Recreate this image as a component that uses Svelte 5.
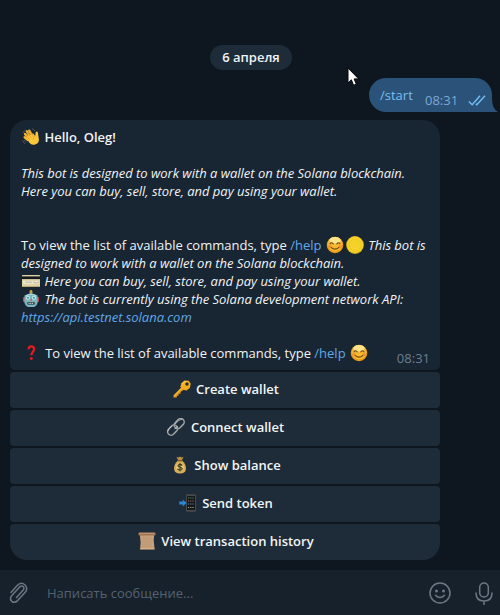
<script>
  const actions = [
    { icon: 'key', label: 'Create wallet' },
    { icon: 'link', label: 'Connect wallet' },
    { icon: 'bag', label: 'Show balance' },
    { icon: 'phone', label: 'Send token' },
    { icon: 'scroll', label: 'View transaction history' }
  ];
</script>

{#snippet emoji(name)}
  <svg class={['emoji', name]} viewBox="0 0 18 18" aria-hidden="true">
    {#if name === 'wave'}
      <g stroke="#48545c" stroke-width="1" fill="none"><path d="M.8 5.2Q1.500 3 3.400 2.200M9.800 .8q2.200.2 3.300 2.400M.7 12.300q.4 2.200 2.200 3.700M2.500 12q.5 1.600 1.800 2.600"/></g>
      <g stroke="#f5b731" stroke-width="2.300" stroke-linecap="round"><path d="M7.500 8 4.800 3.200M9.800 7 7.300 2.600M5.800 9.500 3 6M6 12 2.600 9.300"/></g>
      <path d="M4.500 9.500 11 5.300l2.200 2.600.4-3.500q.9-1.500 2.200-.2l1.100 7.200q.2 3.400-3.200 4.900-4 1.500-6.400-1.500z" fill="#fbc63c"/>
      <path d="M5.500 4.500 9.300 9.700M8.300 3.500l3.200 5.200M4 7.700l3.500 3.800" stroke="#d98a22" stroke-width=".6" fill="none"/>
      <path d="M13.200 7.900q-2.300 1.200-2 3.500" stroke="#e39a27" stroke-width=".7" fill="none"/>
    {:else if name === 'smile'}
      <circle cx="9" cy="9" r="8.300" fill="#ea9a17"/>
      <circle cx="9" cy="8.200" r="7.300" fill="#f5b932"/>
      <ellipse cx="9" cy="4.300" rx="5.600" ry="3.300" fill="#fde48b"/>
      <path d="M4 7.800q1.500-2 3.200 0M10.800 7.800q1.600-2 3.200 0M5 11.300q4 3.800 8 0" fill="none" stroke="#754715" stroke-width="1.100" stroke-linecap="round"/>
      <ellipse cx="3.800" cy="10.500" rx="1.700" ry="1.200" fill="#f17a28" opacity=".65"/><ellipse cx="14.200" cy="10.500" rx="1.700" ry="1.200" fill="#f17a28" opacity=".65"/>
    {:else if name === 'coin'}
      <circle cx="9" cy="9" r="8.900" fill="#d6ad18"/><circle cx="9" cy="8.700" r="8.200" fill="#f5d229"/>
      <circle cx="9" cy="9" r="6" fill="none" stroke="#e3b91f" stroke-width=".8" stroke-dasharray="1 1"/>
    {:else if name === 'card'}
      <rect y="3" width="18" height="12" rx=".7" fill="#ddd3a5"/><path d="M0 4.400h18v2.700H0z" fill="#16191b"/>
      <path d="M1.200 8.800h15v3h-15z" fill="#f0ead0"/><path d="M3 10.200h7" stroke="#b3b3b2"/><path d="M11 10.500q1-1.500 2 0t3-.3" stroke="#818ba8" stroke-width=".6" fill="none"/><path d="M0 14.500h18" stroke="#b6a974"/>
    {:else if name === 'robot'}
      <path d="M7.500 2h3v3h-3z" fill="#7d9ba1"/><circle cx="9" cy="1.500" r="1.400" fill="#d69a32"/>
      <rect x="1" y="7" width="2.300" height="5" rx="1" fill="#c84c50"/><rect x="14.700" y="7" width="2.300" height="5" rx="1" fill="#c84c50"/>
      <path d="M2.500 5.500Q9 1.500 15.500 5.500l.2 6.500q-.7 4-3.700 5H6q-3-1-3.700-5z" fill="#79b7bd"/>
      <path d="M4 5.700q5-3 10 0" fill="none" stroke="#aed9d6"/>
      <circle cx="6" cy="7.800" r="2" fill="#c4f0ed"/><circle cx="12" cy="7.800" r="2" fill="#c4f0ed"/><circle cx="6" cy="7.800" r="1" fill="#2d8da0"/><circle cx="12" cy="7.800" r="1" fill="#2d8da0"/>
      <path d="m9 8.500-1 2h2z" fill="#d83c42"/><rect x="5" y="12" width="8" height="2.800" rx="1.200" fill="#3a5660"/><path d="M6.500 13.400h5" stroke="#e2e5dc" stroke-dasharray="1 .7"/>
    {:else if name === 'question'}
      <path d="M6.700 5.300Q6.500 2.400 9.300 2.400T12 5.200c0 2.200-2.400 2.900-2.600 6" fill="none" stroke="#e01c20" stroke-width="2.300"/><circle cx="9.300" cy="14.600" r="1.500" fill="#e01c20"/>
    {:else if name === 'key'}
      <path d="M8.400 7.200 .5 15.300v2.200h3.300v-1.700h1.700v-2h2v-1.700l3.200-2.300z" fill="#e79b1b"/><path d="m8.800 8-7.500 8" stroke="#f7c33e"/>
      <path d="M8.400 3.200 11.300.5l4.400.2 2 3.100-.9 4.200-3.400 2.400-4.200-.9-1.800-3.100z" fill="#f5ad20"/>
      <path d="m9.200 4 2.500-2 3.300.1" fill="none" stroke="#ffd463"/><circle cx="14" cy="4" r="1.700" fill="#222e35"/>
    {:else if name === 'link'}
      <g fill="none" stroke="#9da2a6" stroke-width="1.500"><rect x="-3.500" y="-5.700" width="7" height="11.400" rx="3.500" transform="translate(5.600 12.100) rotate(43)"/><rect x="-3.500" y="-5.700" width="7" height="11.400" rx="3.500" transform="translate(12.200 5.600) rotate(43)"/></g>
      <path d="M.8 13.500Q.8 11.500 5 8M8 6.200Q12 1 15 1.200M7.500 11.300l3-3" fill="none" stroke="#e3e7e9" stroke-width=".7"/>
    {:else if name === 'bag'}
      <path d="m5.500.7 2 .7L9 .6l1.500.8 2-.6-1.800 4H7.300z" fill="#b99042"/>
      <path d="M7 4.500Q3 8 3 12.500q.2 5 6 5t6-5Q15 8 11 4.500z" fill="#d8ae55"/><path d="M6.500 4.700h5" stroke="#755326" stroke-width="1.200"/>
      <circle cx="9" cy="11.300" r="4" fill="#e9c76f"/><path d="M11.200 9.600Q10.500 8.400 9 8.400t-2 1.300q0 1.200 2 1.500t2.200 1.500q-.2 1.500-2.200 1.500t-2.500-1.400M9 7v8.500" stroke="#3d3a28" stroke-width="1.100" fill="none"/>
    {:else if name === 'phone'}
      <rect x="7" y=".3" width="10" height="17.500" rx="1.200" fill="#47494a"/><rect x="8" y="2" width="8" height="14" fill="#15191b"/>
      <path d="M9 4h6" stroke="#57906b" stroke-width="1" stroke-dasharray="1.200 1"/><path d="M9 7h6" stroke="#a76a4c" stroke-dasharray="1.200 1"/><path d="M9 10h6" stroke="#6688a3" stroke-dasharray="1.200 1"/><path d="M9 13.500h6" stroke="#a3a384" stroke-dasharray="1.200 1"/>
      <path d="M.3 7.600h3.500V5.500L7.600 9l-3.800 3.500v-2.100H.3z" fill="#2789d8"/>
    {:else}
      <path d="M1.800 2.500h14.400l-.5 6 .9 8.500H2.200l.4-7z" fill="#c6a07b"/><rect x=".4" y=".5" width="17.200" height="3" rx="1.300" fill="#9d7557"/><path d="M1 1.300h15.800" stroke="#d2a581" stroke-width=".8"/>
      <path d="M4 6h10M4 8h9.500M4 10h10M4 12h9M4 14h9.500" stroke="#b69474" stroke-width=".6"/><path d="M2 17h14.500" stroke="#e1bc94"/>
    {/if}
  </svg>
{/snippet}

<main>
  <section class="chat">
    <div class="date">6 апреля</div>
    <div class="outgoing">
      <span class="command">/start</span>
      <time>08:31</time>
      <svg class="checks" viewBox="0 0 18 11"><path d="m.8 6.500 3.400 3.200L12 .8M7.800 8.900l1 .8L17 .8" /></svg>
      <svg class="tail" viewBox="0 0 7 14"><path d="M0 0v14h7Q1 11 1 0z" /></svg>
    </div>

    <article class="message">
      <p>{@render emoji('wave')}{' '}<b>Hello, Oleg!</b></p>
      <p></p>
      <p><i>This bot is designed to work with a wallet on the Solana blockchain.</i></p>
      <p><i>Here you can buy, sell, store, and pay using your wallet.</i></p>
      <p></p>
      <p></p>
      <p>To view the list of available commands, type <a href="#help">/help</a> {@render emoji('smile')}{@render emoji('coin')}{' '}<i>This bot is</i></p>
      <p><i>designed to work with a wallet on the Solana blockchain.</i></p>
      <p>{@render emoji('card')}{' '}<i>Here you can buy, sell, store, and pay using your wallet.</i></p>
      <p>{@render emoji('robot')}{' '}<i>The bot is currently using the Solana development network API:</i></p>
      <p><i><a href="#api">https://api.testnet.solana.com</a></i></p>
      <p></p>
      <p>{@render emoji('question')}{' '}To view the list of available commands, type <a href="#help">/help</a> {@render emoji('smile')}</p>
      <time>08:31</time>
    </article>

    <div class="keyboard">
      {#each actions as action}
        <button>{@render emoji(action.icon)}<span>{action.label}</span></button>
      {/each}
    </div>
  </section>

  <footer>
    <svg class="clip" viewBox="0 0 20 22"><path d="m2 10.500 6-6.700q4-4.300 7.800-1.100 3.800 3.500.2 7.700l-7.400 8.200q-3 3-5.800.7-2.700-2.600.1-5.700l7.700-8.500q2-2 3.600-.6 1.600 1.600-.2 3.700l-6.500 7.200" /></svg>
    <span class="placeholder">Написать сообщение...</span>
    <svg class="face" viewBox="0 0 22 22"><circle cx="11" cy="11" r="10" /><circle class="eye" cx="7.500" cy="9" r="1.500" /><circle class="eye" cx="14.500" cy="9" r="1.500" /><path d="M6.500 13.200q4.500 4.800 9 0" /></svg>
    <svg class="mic" viewBox="0 0 18 23"><rect x="4.700" y="1" width="8.600" height="14" rx="4.300" /><path d="M1 11q0 8 8 8t8-8M9 19v4" /></svg>
  </footer>

  <svg class="cursor" viewBox="0 0 12 20"><path d="M1 1v15l3.400-3.200 2.200 5.500 2.700-1.100-2.200-5.300h4.500z" /></svg>
</main>

<style>
  :global(body) { background: #0e1621; }
  main {
    position: relative;
    display: flex;
    flex-direction: column;
    width: 500px;
    height: 615px;
    overflow: hidden;
    background: #0e1620;
    color: #f0f3f5;
    font: 13px/18px "Open Sans", "Noto Sans", sans-serif;
  }
  .chat { display: flex; flex: 1; flex-direction: column; padding: 45px 0 0 10px; box-sizing: border-box; }
  .date { width: 82px; height: 25px; margin-left: 200px; border-radius: 13px; background: #1e2c39; font-weight: 600; line-height: 25px; text-align: center; }
  .outgoing {
    position: relative;
    display: flex;
    align-items: flex-start;
    width: 123px;
    height: 34px;
    margin: 8px 0 8px 359px;
    padding-left: 11px;
    box-sizing: border-box;
    border-radius: 17px 17px 0 17px;
    background: #2b5278;
  }
  .command { width: 45px; padding-top: 8px; color: #78bff2; }
  .outgoing time { width: 43px; padding-top: 13px; color: #7da8d3; }
  .checks { width: 18px; height: 11px; margin-top: 17px; fill: none; stroke: #70bcf2; stroke-width: 1.500; }
  .tail { position: absolute; right: -6px; bottom: 0; width: 7px; height: 14px; fill: #2b5278; }
  .message { position: relative; width: 430px; height: 250px; padding: 8px 11px; box-sizing: border-box; border-radius: 17px 17px 5px 5px; background: #182533; }
  p { height: 18px; margin: 0; white-space: pre; }
  b { font-weight: 600; }
  i { letter-spacing: -0.02px; }
  a { color: #62a8e5; text-decoration: none; }
  .message time { position: absolute; right: 10px; bottom: 3px; color: #6d7f8f; }
  .emoji { width: 18px; height: 18px; margin: 0 1px; vertical-align: top; flex: none; }
  .emoji.question { margin-right: 1.8px; }
  .keyboard { display: flex; flex-direction: column; gap: 2px; width: 430px; margin-top: 2px; }
  button { display: flex; align-items: center; justify-content: center; gap: 4px; height: 36px; padding: 0 0 2px 1px; border: 0; border-radius: 4px; background: #1e2c39; color: #f2f5f7; font: 600 13px/18px "Open Sans", sans-serif; }
  button:last-child { border-radius: 4px 4px 17px 17px; }
  .emoji.link { margin: 0 2px 0 0; }
  footer { display: flex; align-items: center; height: 45px; padding: 1px 7px 0 9px; box-sizing: border-box; background: #17212b; color: #546170; }
  footer svg { fill: none; stroke: #6c7883; stroke-width: 1.500; stroke-linecap: round; }
  .clip { width: 20px; height: 22px; }
  .placeholder { flex: 1; margin-left: 18px; }
  .face { width: 22px; height: 22px; }
  footer .eye { fill: #6c7883; stroke: none; }
  .mic { width: 18px; height: 23px; margin-left: 24px; }
  .cursor { position: absolute; left: 347px; top: 67px; width: 12px; height: 20px; fill: #fff; stroke: #05080b; stroke-width: 1; }
</style>
